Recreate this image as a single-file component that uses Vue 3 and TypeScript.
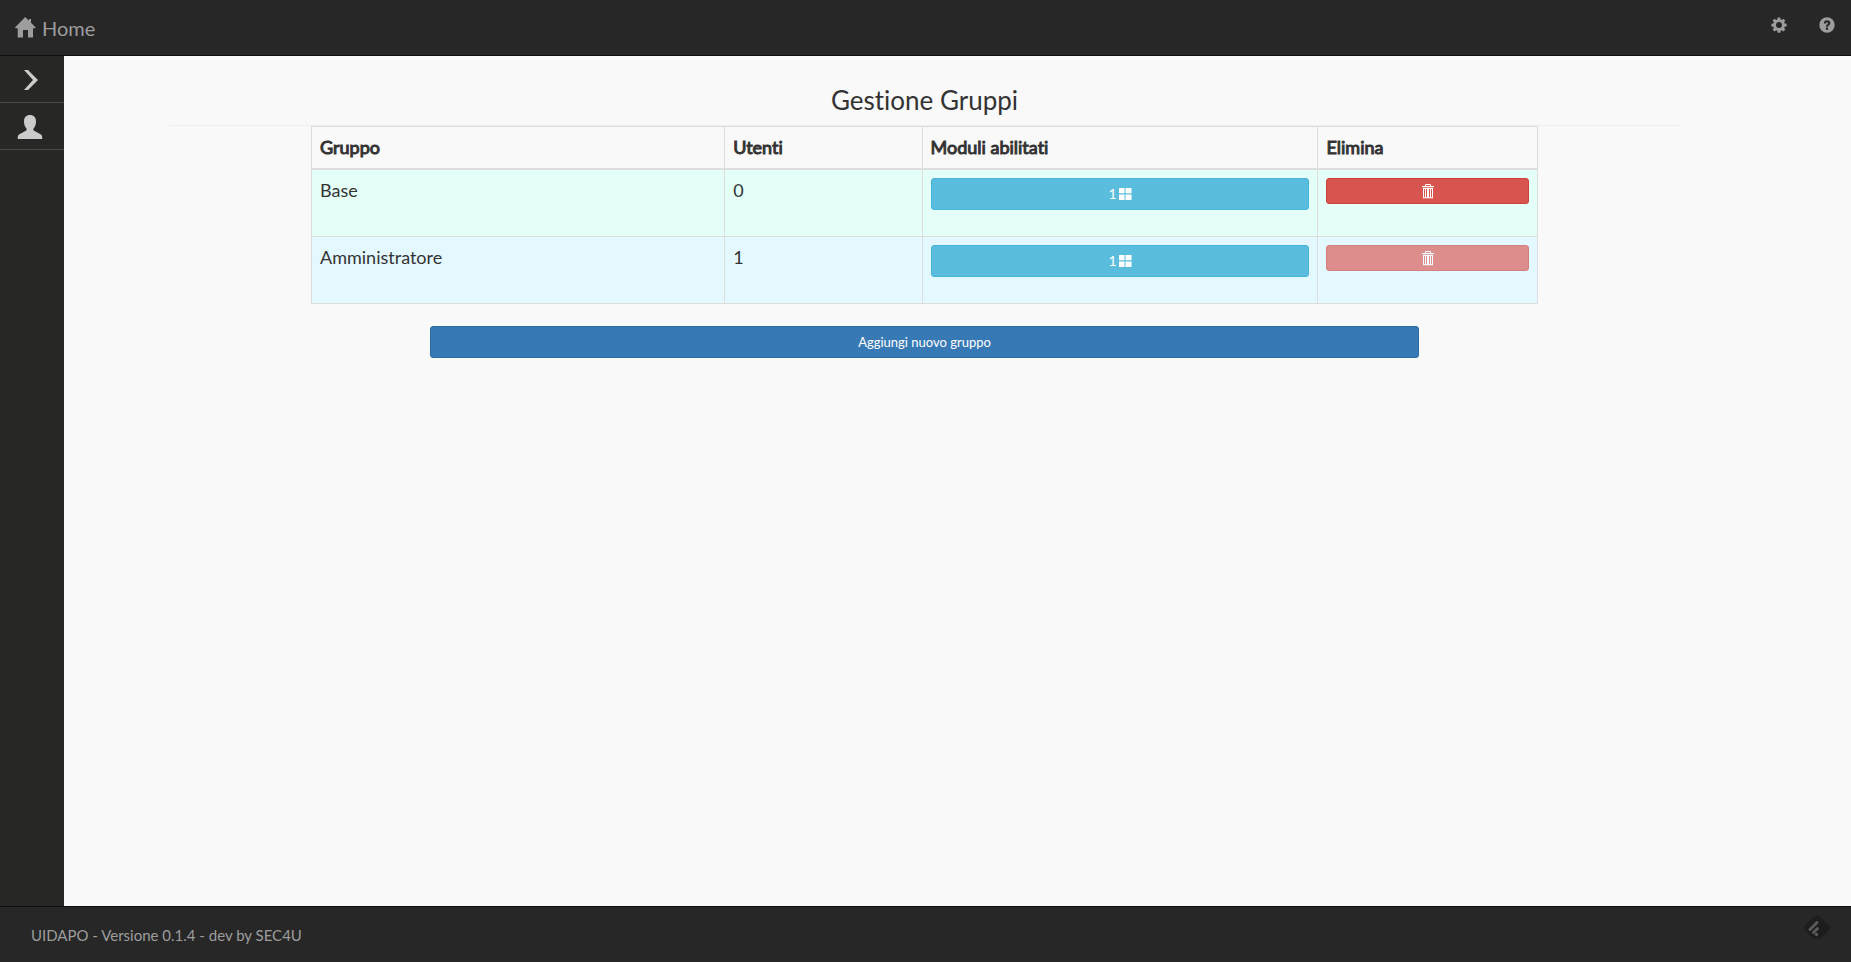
<script setup lang="ts">
interface Group {
  name: string
  users: number
  modules: number
  removable: boolean
}

const groups: Group[] = [
  { name: 'Base', users: 0, modules: 1, removable: true },
  { name: 'Amministratore', users: 1, modules: 1, removable: false },
]
</script>

<template>
  <div class="shell">
    <header class="topbar">
      <a class="brand" href="#">
        <svg class="icon-home" viewBox="0 0 21 21" aria-hidden="true">
          <path d="M10.2 0 14 3.800V2h2v3.800l4.700 4.700-.5.8H18V20.400h-5V13H8v7.400H2.700V11.300H.5L0 10.500z" />
        </svg>
        <span>Home</span>
      </a>
      <nav class="tools">
        <a href="#" aria-label="Impostazioni">
          <svg viewBox="0 0 16 16" aria-hidden="true">
            <path fill-rule="evenodd" d="M6.700 .5h2.600l.4 2 1.100.5 1.700-1.200 1.800 1.800-1.200 1.700.5 1.100 2 .4v2.600l-2 .4-.5 1.100 1.200 1.700-1.800 1.800-1.700-1.200-1.100.5-.4 2H6.700l-.4-2-1.100-.5-1.700 1.200-1.800-1.800 1.200-1.700-.5-1.100-2-.4V6.800l2-.4.5-1.100-1.200-1.700 1.800-1.800 1.700 1.200 1.100-.5zM8 5a3 3 0 1 0 0 6 3 3 0 0 0 0-6z" />
          </svg>
        </a>
        <a href="#" aria-label="Aiuto">
          <svg viewBox="0 0 16 16" aria-hidden="true">
            <circle cx="8" cy="8" r="7.700" />
            <path class="mark" d="M4.800 6.500C4.800 4.400 6.200 3.200 8.100 3.200s3.300 1 3.300 2.900c0 2.200-2.300 2.300-2.300 3.700H6.900c0-2.400 2.100-2.500 2.100-3.600 0-.6-.4-.9-.9-.9-.7 0-1 .5-1 1.200zM6.900 10.600h2.200v2.200H6.900z" />
          </svg>
        </a>
      </nav>
    </header>

    <aside class="sidebar">
      <button class="side-item" type="button" aria-label="Espandi menu">
        <svg class="icon-side" viewBox="0 0 26 26" aria-hidden="true">
          <path d="M7 3h4l10 10-10 10H7l9-10z" />
        </svg>
      </button>
      <a class="side-item" href="#" aria-label="Utenti">
        <svg class="icon-side" viewBox="0 0 26 26" aria-hidden="true">
          <path d="M13 1c3.700 0 6 2.400 6 6.200 0 3-.8 5.500-2.300 7.100-.6.700-.5 2 .4 2.500l6.500 3.400c1.300.8 1.700 1.800 1.700 4.800H.7c0-3 .4-4 1.700-4.800l6.500-3.400c.9-.5 1-1.800.4-2.500C7.800 12.700 7 10.200 7 7.200 7 3.400 9.300 1 13 1z" />
        </svg>
      </a>
    </aside>

    <main class="content">
      <section class="panel">
        <h1>Gestione Gruppi</h1>
        <table>
          <colgroup>
            <col class="col-group" />
            <col class="col-users" />
            <col class="col-modules" />
            <col class="col-delete" />
          </colgroup>
          <thead>
            <tr>
              <th scope="col">Gruppo</th>
              <th scope="col">Utenti</th>
              <th scope="col">Moduli abilitati</th>
              <th scope="col">Elimina</th>
            </tr>
          </thead>
          <tbody>
            <tr v-for="group in groups" :key="group.name">
              <td>{{ group.name }}</td>
              <td>{{ group.users }}</td>
              <td>
                <button class="btn btn-info" type="button" :aria-label="`Moduli di ${group.name}: ${group.modules}`">
                  <span>{{ group.modules }}</span>
                  <svg class="icon-modules" viewBox="0 0 14 14" aria-hidden="true">
                    <path d="M1.500 1H6.500V6.200H1.500A.5.500 0 0 1 1 5.700V1.500A.5.500 0 0 1 1.500 1zM7.500 1H13a.5.500 0 0 1 .5.500V6.200h-6zM1 7.500h5.500V13h-5a.5.500 0 0 1-.5-.5zM7.500 7.500h6v5a.5.500 0 0 1-.5.500H7.500z" />
                  </svg>
                </button>
              </td>
              <td>
                <button class="btn btn-danger" type="button" :disabled="!group.removable" :aria-label="`Elimina ${group.name}`">
                  <svg class="icon-trash" viewBox="0 0 14 16" aria-hidden="true">
                    <path fill-rule="evenodd" d="M4 3V1.800L5 1h4l1 .8V3h3v1.200H1V3zM5 3h4V2H5zM2 5h10v10.300H2zM3 6v8.300h1V6zM5 6v8.300h1V6zM8 6v8.300h1V6zM10 6v8.300h1V6z" />
                  </svg>
                </button>
              </td>
            </tr>
          </tbody>
        </table>
        <button class="btn btn-primary" type="button">Aggiungi nuovo gruppo</button>
      </section>
    </main>

    <footer class="bottombar">
      <span>UIDAPO - Versione 0.1.4 - dev by SEC4U</span>
      <a class="feedly" href="#" aria-label="Feedly">
        <svg viewBox="0 0 28 24" aria-hidden="true">
          <path class="plate" d="M11.500 1.500Q14-.7 16.500 1.500L26 10.500Q28 12.700 26 15L19 22.500Q18.200 23.500 17 23.500H11Q9.800 23.500 9 22.500L2 15Q0 12.700 2 10.500z" />
          <path class="bars" d="M7 14.500 14 7.500M10.500 17.500 14.500 13.500" />
          <circle class="dot" cx="13.500" cy="19.500" r="1.700" />
        </svg>
      </a>
    </footer>
  </div>
</template>

<style>
body {
  margin: 0;
  background: #f9f9f9;
}
</style>

<style scoped>
.shell {
  display: grid;
  grid-template: auto 1fr auto / 64px 1fr;
  min-height: 100vh;
  font-family: Lato, "Open Sans", sans-serif;
  font-size: 18px;
  font-variant-ligatures: none;
  line-height: 24px;
  color: #333;
}

.shell * {
  box-sizing: border-box;
}

svg {
  display: block;
  fill: currentColor;
}

a {
  color: inherit;
  text-decoration: none;
}

.topbar {
  grid-column: 1 / -1;
  display: flex;
  justify-content: space-between;
  height: 56px;
  padding: 0 16px 0 15px;
  background: #272727;
  border-bottom: 1px solid #101010;
  color: #9d9d9d;
}

.brand {
  display: flex;
  align-items: center;
  gap: 6px;
  font-size: 20px;
}

.icon-home {
  width: 21px;
  height: 21px;
}

.tools {
  display: flex;
  gap: 32px;
  padding-top: 17px;
}

.tools svg {
  width: 16px;
  height: 16px;
}

.tools .mark {
  fill: #272727;
}

.sidebar {
  background: #272725;
  color: #ccc;
}

.side-item {
  display: flex;
  align-items: flex-end;
  width: 100%;
  height: 47px;
  padding: 0 17px 9px;
  border: 0;
  border-bottom: 1px solid #4a4a4a;
  background: none;
  color: inherit;
}

.icon-side {
  width: 26px;
  height: 26px;
}

.content {
  padding: 28px 171px 28px 105px;
}

.panel {
  display: flex;
  flex-direction: column;
  align-items: center;
}

h1 {
  width: 100%;
  margin: 0;
  padding-bottom: 9px;
  border-bottom: 1px solid #eee;
  font-size: 26px;
  font-weight: 400;
  line-height: 32px;
  text-align: center;
}

table {
  width: 81.2%;
  margin-bottom: 22px;
  table-layout: fixed;
  border-collapse: collapse;
}

.col-group {
  width: 33.7%;
}

.col-users {
  width: 16.1%;
}

.col-modules {
  width: 32.3%;
}

.col-delete {
  width: 17.9%;
}

th,
td {
  padding: 8px;
  border: 1px solid #ddd;
  text-align: left;
  vertical-align: top;
}

th {
  height: 42px;
  border-bottom-width: 2px;
  font-weight: 400;
  -webkit-text-stroke: 1px currentColor;
}

.shell td {
  box-sizing: content-box;
  height: 50px;
}

tbody tr:nth-child(odd) {
  background: #e3fff8;
}

tbody tr:nth-child(even) {
  background: #e4f8ff;
}

.btn {
  display: flex;
  align-items: center;
  justify-content: center;
  width: 100%;
  height: 32px;
  padding: 0;
  border: 1px solid;
  border-radius: 3px;
  font-family: inherit;
  font-size: 13px;
  line-height: 20px;
  color: #fff;
}

.btn-info {
  gap: 1px;
  background: #5bbddd;
  border-color: #46b5d9;
  font-size: 14px;
}

.btn-danger {
  height: 26px;
  background: #d8544f;
  border-color: #cf403b;
}

.btn-danger:disabled {
  opacity: 0.65;
}

.btn-primary {
  width: 65.5%;
  background: #3779b5;
  border-color: #2e6da4;
}

.icon-modules {
  width: 14px;
  height: 14px;
}

.icon-trash {
  width: 14px;
  height: 16px;
}

.bottombar {
  grid-column: 1 / -1;
  display: flex;
  align-items: center;
  justify-content: space-between;
  height: 56px;
  padding: 0 20px 0 31px;
  background: #272727;
  border-top: 1px solid #101010;
  color: #9d9d9d;
  font-size: 15px;
}

.feedly {
  align-self: flex-start;
  padding-top: 8px;
}

.feedly svg {
  width: 28px;
  height: 24px;
}

.plate {
  fill: #1d1d1d;
}

.bars {
  fill: none;
  stroke: #5a5a5a;
  stroke-width: 3;
  stroke-linecap: round;
}

.dot {
  fill: #5a5a5a;
}
</style>
